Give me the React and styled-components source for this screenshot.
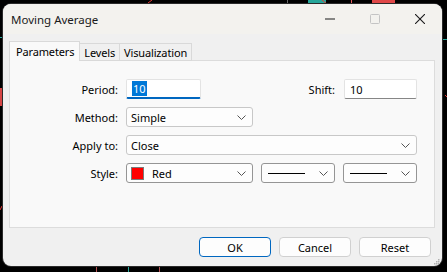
import styled, { createGlobalStyle, css } from 'styled-components'

const GlobalStyle = createGlobalStyle`
    html, body {
        margin: 0;
        padding: 0;
        background: #000;
    }
    body {
        font-family: 'Noto Sans', 'Open Sans', sans-serif;
        font-size: 11px;
        color: #000;
    }
`

const Screen = styled.div`
    position: relative;
    width: 447px;
    height: 272px;
    box-sizing: border-box;
    padding: 4px 5px 6px 3px;
    background: #000;
    overflow: hidden;
`

const ChartLayer = styled.svg`
    position: absolute;
    inset: 0;
    width: 447px;
    height: 272px;
`

const Dialog = styled.div`
    position: relative;
    z-index: 1;
    width: 439px;
    height: 262px;
    border-radius: 8px;
    overflow: hidden;
    display: flex;
    flex-direction: column;
    background: #f0f0f0;
    box-shadow: 0 0 0 1px #2a2a2a;
`

const TitleBar = styled.div`
    height: 30px;
    flex: none;
    display: flex;
    align-items: center;
    background: #f3f2ee;
`

const Title = styled.div`
    flex: 1;
    padding-left: 8px;
    font-size: 11.5px;
    color: #1a1a1a;
`

const WinButton = styled.div`
    width: 45px;
    height: 30px;
    display: flex;
    align-items: center;
    justify-content: center;
`

const Body = styled.div`
    position: relative;
    flex: 1;
    display: flex;
    flex-direction: column;
    padding: 7px 7px 0 6px;
`

const TabRow = styled.div`
    display: flex;
    align-items: flex-end;
    height: 20px;
    margin-bottom: -1px;
    position: relative;
    z-index: 1;
`

const Tab = styled.div`
    box-sizing: border-box;
    display: flex;
    align-items: center;
    padding: 0 4px;
    letter-spacing: -0.15px;
    border: 1px solid #d9d9d9;
    border-bottom: none;
    ${(p) =>
        p.$active
            ? css`
                  height: 20px;
                  padding: 0 5px 1px 6px;
                  background: #f9f9f9;
              `
            : css`
                  height: 18px;
                  border-left: none;
                  background: #f0f0f0;
                  border-bottom: 1px solid #d9d9d9;
              `}
`

const Panel = styled.div`
    height: 168px;
    box-sizing: border-box;
    border: 1px solid #dcdcdc;
    background: #f9f9f9;
    padding: 18px 17px 0 0;
    display: flex;
    flex-direction: column;
    gap: 8px;
`

const Row = styled.div`
    display: flex;
    align-items: center;
    gap: 8px;
    height: 20px;
`

const Label = styled.div`
    width: ${(p) => (p.$auto ? 'auto' : '108px')};
    flex: none;
    text-align: right;
`

const ShiftGroup = styled.div`
    margin-left: auto;
    display: flex;
    align-items: center;
    gap: 9px;
`

const TextBox = styled.div`
    box-sizing: border-box;
    width: ${(p) => p.$w}px;
    height: 20px;
    display: flex;
    align-items: center;
    padding: 0 5px;
    background: #fff;
    border: 1px solid #e3e3e3;
    border-bottom: ${(p) => (p.$focused ? '2px solid #0067c0' : '1px solid #868686')};
    border-radius: 2px;
`

const Selected = styled.span`
    background: #0078d7;
    color: #fff;
    padding: 0 1px;
    line-height: 15px;
`

const Select = styled.div`
    box-sizing: border-box;
    ${(p) => (p.$w ? `width: ${p.$w}px;` : 'flex: 1;')}
    height: 20px;
    display: flex;
    align-items: center;
    gap: 8px;
    padding: 0 6px 0 4px;
    background: #fdfdfd;
    border: 1px solid ${(p) => (p.$dark ? '#959595' : '#c8c8c8')};
    border-radius: 3px;
`

const SelectText = styled.div`
    flex: 1;
    display: flex;
    align-items: center;
    gap: 8px;
`

const Swatch = styled.span`
    width: 11px;
    height: 11px;
    background: #ff0000;
    border: 1px solid #7a7a7a;
`

const LineSample = styled.span`
    flex: 1;
    height: 1px;
    background: #000;
    margin: 0 6px 0 2px;
`

const Footer = styled.div`
    display: flex;
    justify-content: flex-end;
    gap: 8px;
    padding: 9px 4px 0 0;
`

const Button = styled.div`
    box-sizing: border-box;
    width: 72px;
    height: 20px;
    display: flex;
    align-items: center;
    justify-content: center;
    background: #fdfdfd;
    border: 1px solid ${(p) => (p.$primary ? '#0067c0' : '#d0d0d0')};
    border-radius: 4px;
`

const Grip = styled.svg`
    position: absolute;
    right: 2px;
    bottom: 1px;
`

function Chevron() {
    return (
        <svg width="9" height="5" viewBox="0 0 9 5">
            <path d="M0.5 0.5 L4.5 4.5 L8.5 0.5" fill="none" stroke="#555" strokeWidth="1" />
        </svg>
    )
}

function Chart() {
    return (
        <ChartLayer viewBox="0 0 447 272">
            <rect x="287" y="0" width="1" height="5" fill="#666" />
            <rect x="308" y="0" width="18" height="3" fill="#26a69a" />
            <line x1="322" y1="0" x2="327" y2="4" stroke="#e53935" />
            <rect x="351" y="0" width="1" height="5" fill="#e35a5a" />
            <rect x="372" y="0" width="23" height="3" fill="#e04848" />
            <line x1="148" y1="3" x2="152" y2="0" stroke="#e53935" />
            <rect x="0" y="37" width="3" height="1" fill="#26a69a" />
            <rect x="0" y="88" width="3" height="18" fill="#d64545" />
            <line x1="0" y1="210" x2="2" y2="206" stroke="#e53935" />
            <rect x="443" y="39" width="4" height="1" fill="#26a69a" />
            <line x1="445" y1="95" x2="447" y2="97" stroke="#e53935" />
            <rect x="96" y="266" width="1" height="6" fill="#b05050" />
            <rect x="128" y="266" width="1" height="6" fill="#26a69a" />
            <rect x="159" y="266" width="1" height="6" fill="#b05050" />
        </ChartLayer>
    )
}

export default function App() {
    return (
        <>
            <GlobalStyle />
            <Screen>
                <Chart />
                <Dialog>
                    <TitleBar>
                        <Title>Moving Average</Title>
                        <WinButton>
                            <svg width="10" height="10" viewBox="0 0 10 10">
                                <rect x="0" y="4.5" width="10" height="1" fill="#1a1a1a" />
                            </svg>
                        </WinButton>
                        <WinButton>
                            <svg width="10" height="10" viewBox="0 0 10 10">
                                <rect x="0.5" y="0.5" width="9" height="9" rx="1" fill="none" stroke="#c4c4c4" />
                            </svg>
                        </WinButton>
                        <WinButton>
                            <svg width="10" height="10" viewBox="0 0 10 10">
                                <path d="M0 0 L10 10 M10 0 L0 10" stroke="#1a1a1a" strokeWidth="1.1" />
                            </svg>
                        </WinButton>
                    </TitleBar>
                    <Body>
                        <TabRow>
                            <Tab $active>Parameters</Tab>
                            <Tab>Levels</Tab>
                            <Tab>Visualization</Tab>
                        </TabRow>
                        <Panel>
                            <Row>
                                <Label>Period:</Label>
                                <TextBox $w={75} $focused>
                                    <Selected>10</Selected>
                                </TextBox>
                                <ShiftGroup>
                                    <Label $auto>Shift:</Label>
                                    <TextBox $w={73}>10</TextBox>
                                </ShiftGroup>
                            </Row>
                            <Row>
                                <Label>Method:</Label>
                                <Select $w={127}>
                                    <SelectText>Simple</SelectText>
                                    <Chevron />
                                </Select>
                            </Row>
                            <Row>
                                <Label>Apply to:</Label>
                                <Select>
                                    <SelectText>Close</SelectText>
                                    <Chevron />
                                </Select>
                            </Row>
                            <Row>
                                <Label>Style:</Label>
                                <Select $w={127} $dark>
                                    <SelectText>
                                        <Swatch />
                                        Red
                                    </SelectText>
                                    <Chevron />
                                </Select>
                                <Select $w={74} $dark>
                                    <LineSample />
                                    <Chevron />
                                </Select>
                                <Select $w={74} $dark>
                                    <LineSample />
                                    <Chevron />
                                </Select>
                            </Row>
                        </Panel>
                        <Footer>
                            <Button $primary>OK</Button>
                            <Button>Cancel</Button>
                            <Button>Reset</Button>
                        </Footer>
                        <Grip width="7" height="7" viewBox="0 0 7 7">
                            <rect x="5" y="1" width="1.5" height="1.5" fill="#b0b0b0" />
                            <rect x="3" y="3" width="1.5" height="1.5" fill="#b0b0b0" />
                            <rect x="5" y="3" width="1.5" height="1.5" fill="#b0b0b0" />
                            <rect x="1" y="5" width="1.5" height="1.5" fill="#b0b0b0" />
                            <rect x="3" y="5" width="1.5" height="1.5" fill="#b0b0b0" />
                            <rect x="5" y="5" width="1.5" height="1.5" fill="#b0b0b0" />
                        </Grip>
                    </Body>
                </Dialog>
            </Screen>
        </>
    )
}
